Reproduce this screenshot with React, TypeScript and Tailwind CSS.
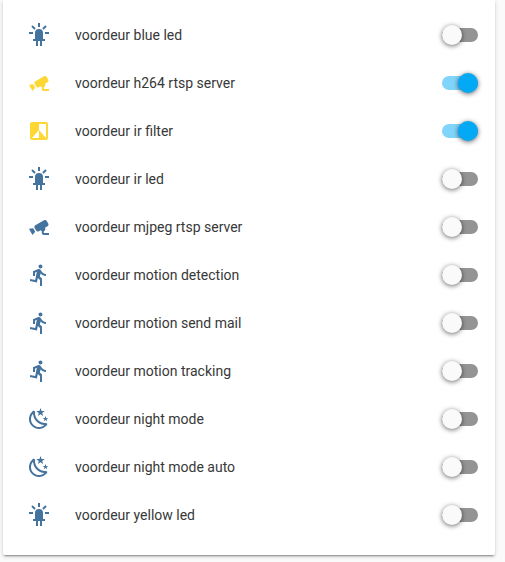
import { useState } from "react";
import clsx from "clsx";

const icons = {
  led: "M11,0V4H13V0H11M18.3,2.29L15.24,5.29L16.64,6.71L19.7,3.71L18.3,2.29M5.71,2.29L4.29,3.71L7.29,6.71L8.71,5.29L5.71,2.29M12,6A4,4 0 0,0 8,10V16H6V18H9V23H11V18H13V23H15V18H18V16H16V10A4,4 0 0,0 12,6M2,9V11H6V9H2M18,9V11H22V9H18Z",
  cctv: "M18.15,4.94C17.77,4.91 17.37,5 17,5.2L8.35,10.2C7.39,10.76 7.07,12 7.62,12.94L9.12,15.53C9.67,16.5 10.89,16.82 11.85,16.27L13.65,15.23C13.92,15.69 14.32,16.06 14.81,16.27V18.04C14.81,19.13 15.7,20 16.81,20H22V18.04H16.81V16.27C17.72,15.87 18.31,14.97 18.31,14C18.31,13.54 18.19,13.11 17.97,12.73L20.5,11.27C21.47,10.71 21.8,9.5 21.24,8.53L19.74,5.94C19.4,5.34 18.79,5 18.15,4.94M6.22,13.17L2,13.87L2.75,15.17L4.75,18.63L5.5,19.93L8.22,16.63L6.22,13.17Z",
  filter: "M19,19L12,11V19H5L12,11V5H19M19,3H5A2,2 0 0,0 3,5V19A2,2 0 0,0 5,21H19A2,2 0 0,0 21,19V5A2,2 0 0,0 19,3Z",
  run: "M13.49 5.48c1.1 0 2-.9 2-2s-.9-2-2-2-2 .9-2 2 .9 2 2 2zm-3.6 13.9l1-4.4 2.1 2v6h2v-7.5l-2.1-2 .6-3c1.3 1.5 3.3 2.5 5.5 2.5v-2c-1.9 0-3.5-1-4.3-2.4l-1-1.6c-.4-.6-1-1-1.7-1-.3 0-.5.1-.8.1l-5.2 2.2v4.7h2v-3.4l1.8-.7-1.6 8.1-4.9-1-.4 2 7 1.4z",
  night: "M17.75,4.09L15.22,6.03L16.13,9.09L13.5,7.28L10.87,9.09L11.78,6.03L9.25,4.09L12.44,4L13.5,1L14.56,4L17.75,4.09M21.25,11L19.61,12.25L20.2,14.23L18.5,13.06L16.8,14.23L17.39,12.25L15.75,11L17.81,10.95L18.5,9L19.19,10.95L21.25,11M18.97,15.95C19.8,15.87 20.69,17.05 20.16,17.8C19.84,18.25 19.5,18.67 19.08,19.07C15.17,23 8.84,23 4.94,19.07C1.03,15.17 1.03,8.83 4.94,4.93C5.34,4.53 5.76,4.17 6.21,3.85C6.96,3.32 8.14,4.21 8.06,5.04C7.79,7.9 8.75,10.87 10.95,13.06C13.14,15.26 16.1,16.22 18.97,15.95M17.33,17.97C14.5,17.81 11.7,16.64 9.53,14.5C7.36,12.31 6.2,9.5 6.04,6.68C3.23,9.82 3.34,14.64 6.35,17.66C9.37,20.67 14.19,20.78 17.33,17.97Z",
};

type Entity = { name: string; icon: keyof typeof icons; on?: boolean };

const entities: Entity[] = [
  { name: "voordeur blue led", icon: "led" },
  { name: "voordeur h264 rtsp server", icon: "cctv", on: true },
  { name: "voordeur ir filter", icon: "filter", on: true },
  { name: "voordeur ir led", icon: "led" },
  { name: "voordeur mjpeg rtsp server", icon: "cctv" },
  { name: "voordeur motion detection", icon: "run" },
  { name: "voordeur motion send mail", icon: "run" },
  { name: "voordeur motion tracking", icon: "run" },
  { name: "voordeur night mode", icon: "night" },
  { name: "voordeur night mode auto", icon: "night" },
  { name: "voordeur yellow led", icon: "led" },
];

function Toggle({ on, label, onClick }: { on: boolean; label: string; onClick: () => void }) {
  return (
    <button role="switch" aria-checked={on} aria-label={label} onClick={onClick} className="relative flex h-5 w-9 items-center">
      <span className={clsx("h-3.5 w-full rounded-full", on ? "bg-[#81d4fa]" : "bg-[#949494]")} />
      <span
        className={clsx(
          "absolute top-0 size-5 rounded-full shadow-[0_1px_5px_rgba(0,0,0,0.6)] transition-all",
          on ? "left-4 bg-[#03a9f4]" : "left-0 bg-[#fafafa]"
        )}
      />
    </button>
  );
}

function EntityRow({ entity }: { entity: Entity }) {
  const [on, setOn] = useState(!!entity.on);

  return (
    <li className="flex h-12 items-center">
      <svg viewBox="0 0 24 24" className={clsx("size-6 shrink-0 fill-current", on ? "text-[#fdd835]" : "text-[#44739e]")}>
        <path d={icons[entity.icon]} />
      </svg>
      <span className="ml-6 flex-1 text-sm text-[#383838]">{entity.name}</span>
      <Toggle on={on} label={entity.name} onClick={() => setOn(!on)} />
    </li>
  );
}

export default function App() {
  return (
    <main className="h-[562px] w-[505px] overflow-hidden bg-[#fafafa] pr-2.5 pl-[3px] font-['Roboto',sans-serif]">
      <ul className="h-[555px] rounded-b-xs bg-white pt-[11px] pr-[17px] pl-6 shadow-[0_2px_2px_0_rgba(0,0,0,0.14),0_1px_5px_0_rgba(0,0,0,0.12),0_3px_1px_-2px_rgba(0,0,0,0.2)]">
        {entities.map((entity) => (
          <EntityRow key={entity.name} entity={entity} />
        ))}
      </ul>
    </main>
  );
}
